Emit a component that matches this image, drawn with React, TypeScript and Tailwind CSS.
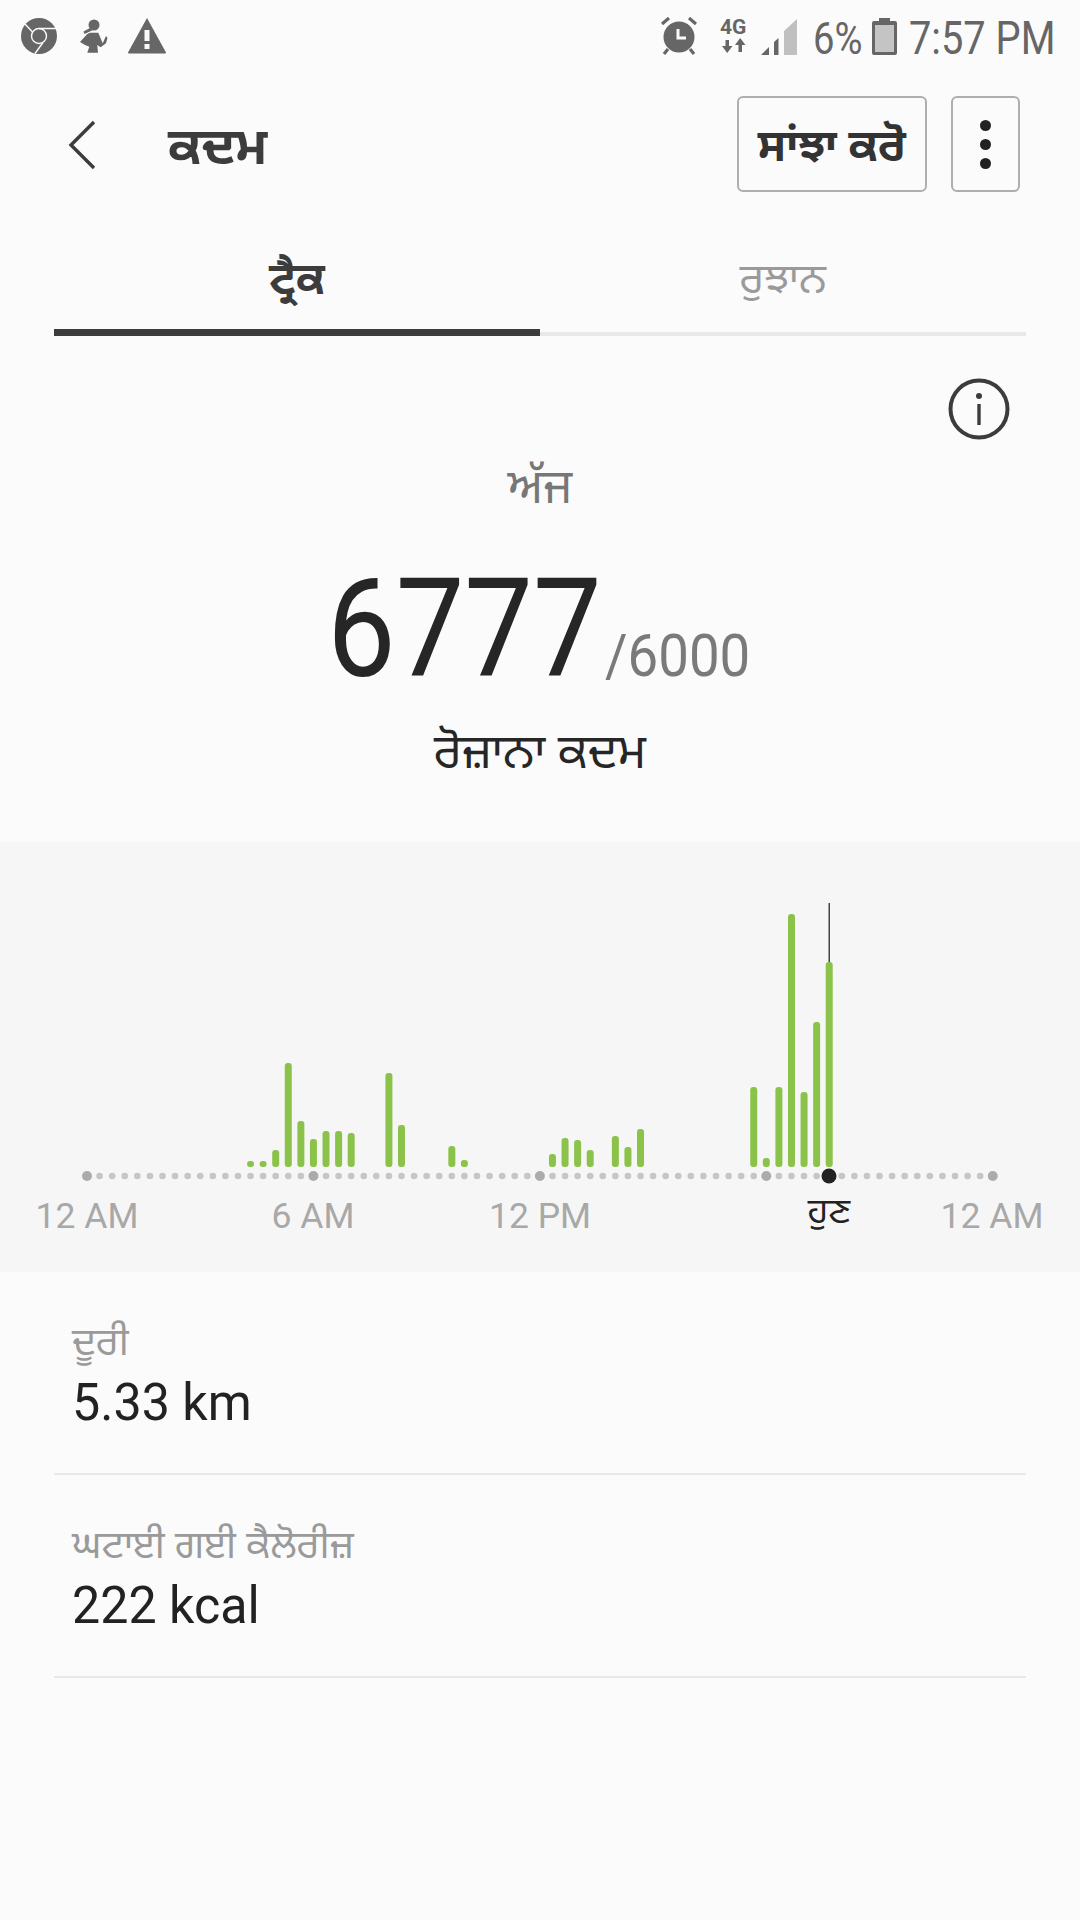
const font = { fontFamily: '"Noto Sans", "Noto Sans Gurmukhi", Roboto, sans-serif' };

const STEP = 12.58;
// [slot on the 15 min axis, top y of the bar]
const bars: [number, number][] = [
  [13, 1161], [14, 1161], [15, 1150], [16, 1063], [17, 1121], [18, 1139], [19, 1131], [20, 1131], [21, 1133],
  [24, 1073], [25, 1125], [29, 1146], [30, 1160],
  [37, 1154], [38, 1138], [39, 1140], [40, 1150], [42, 1136], [43, 1147], [44, 1129],
  [53, 1087], [54, 1158], [55, 1087], [56, 914], [57, 1092], [58, 1022], [59, 962],
];

function StatusBar() {
  return (
    <div className="h-[72px] flex items-center justify-between pl-[21px] pr-[27px] text-[#666666]">
      <div className="flex items-center">
        <svg width="36" height="36" viewBox="0 0 36 36">
          <circle cx="18" cy="18" r="18" fill="#666666" />
          <circle cx="18" cy="18" r="7.5" fill="none" stroke="#fbfbfb" strokeWidth="1.4" />
          <path d="M18 10.5H35M11.5 14L4 6M22 24.5L14 35.5" stroke="#fbfbfb" strokeWidth="1.4" fill="none" />
        </svg>
        <svg className="ml-[23px]" width="28" height="38" viewBox="0 0 28 38" fill="#666666">
          <circle cx="14" cy="8" r="5.5" />
          <path d="M11 10.5L3.5 14.5L4.5 17L12 13.5Z" />
          <path d="M10 15.7H18.3L22.7 26.3L26 19L27.5 21L26 26.3L20.7 30.3L17.3 28L18 35.7H7.3L9.3 29.7L5 28L0 25L7.3 17Z" />
        </svg>
        <svg className="ml-[20px]" width="38" height="36" viewBox="0 0 38 36">
          <path d="M19 0L38 34.5Q38 35.5 37 35.5H1Q0 35.5 0 34.5Z" fill="#666666" />
          <rect x="16.5" y="12" width="5" height="11" fill="#fbfbfb" />
          <rect x="16.5" y="26" width="5" height="5" fill="#fbfbfb" />
        </svg>
      </div>
      <div className="flex items-center">
        <svg width="36" height="38" viewBox="0 0 36 38">
          <circle cx="18" cy="20" r="15.5" fill="#666666" />
          <path d="M1 7L8 1M35 7L28 1M7 32L3 37M29 32L33 37" stroke="#666666" strokeWidth="3.2" fill="none" />
          <path d="M17 12V21H25" stroke="#fbfbfb" strokeWidth="3" fill="none" />
        </svg>
        <svg className="ml-[22px] overflow-visible" width="30" height="38" viewBox="0 0 30 38">
          <text x="1" y="17" fontSize="21" fontWeight="700" fill="#666666" fontFamily="Roboto, sans-serif">4G</text>
          <path d="M6.5 23H10V29H13.5L8.2 36L3 29H6.5Z" fill="#666666" />
          <path d="M19.5 35H23V28H26.5L21.2 21L16 28H19.5Z" fill="#666666" />
        </svg>
        <svg className="ml-[12px]" width="36" height="38" viewBox="0 0 36 38">
          <path d="M0 38L8 30V38Z" fill="#666666" />
          <path d="M13 38V25L17.5 21V38Z" fill="#666666" />
          <path d="M23 38V14L36 2V38Z" fill="#c0c0c0" />
        </svg>
        <span className="w-[46px] ml-[16px] text-[45px] leading-none origin-left scale-x-[0.85] whitespace-nowrap translate-y-[2px]" style={{ fontFamily: "Roboto, sans-serif" }}>6%</span>
        <svg className="ml-[13px]" width="25" height="37" viewBox="0 0 25 37">
          <path d="M7 0H18V3H23Q25 3 25 5V35Q25 37 23 37H2Q0 37 0 35V5Q0 3 2 3H7Z" fill="#666666" />
          <rect x="3" y="7" width="19" height="27" fill="#c4c4c4" />
        </svg>
        <span className="w-[144px] ml-[12px] text-[46px] leading-none origin-left scale-x-[0.865] whitespace-nowrap translate-y-[2px]" style={{ fontFamily: "Roboto, sans-serif" }}>7:57 PM</span>
      </div>
    </div>
  );
}

function Chart() {
  const dots = [];
  for (let i = 0; i <= 72; i++) {
    const big = i % 18 === 0;
    dots.push(<circle key={i} cx={87 + i * STEP} cy={1176} r={big ? 5 : 3.3} fill={big ? "#ababab" : "#c6c6c6"} />);
  }
  return (
    <div className="bg-[#f6f6f6] h-[430px]">
      <svg className="block" width="1080" height="352" viewBox="0 842 1080 352">
        <rect x="828.5" y="903" width="1.5" height="70" fill="#444444" />
        {dots}
        {bars.map(([slot, top]) => (
          <rect key={slot} x={87 + slot * STEP - 3.5} y={top} width="7" height={1167 - top} rx="3" fill="#8bc34a" />
        ))}
        <circle cx="829" cy="1176" r="7.5" fill="#222222" />
      </svg>
      <div className="flex text-[35.5px] leading-[44px] text-[#a8a8a8]" style={{ fontFamily: "Roboto, sans-serif" }}>
        <span className="w-[120px] ml-[27px] text-center">12 AM</span>
        <span className="w-[120px] ml-[106px] text-center">6 AM</span>
        <span className="w-[120px] ml-[107px] text-center">12 PM</span>
        <span className="w-[120px] ml-[169px] text-center text-[#222222] -mt-[7px]" style={font}>ਹੁਣ</span>
        <span className="w-[120px] ml-[43px] text-center">12 AM</span>
      </div>
    </div>
  );
}

function Stat({ label, value, className }: { label: string; value: string; className: string }) {
  return (
    <div className={"border-b-2 border-[#e8e8e8] " + className}>
      <div className="pl-[18px] text-[39px] leading-[46px] text-[#9a9a9a] -mt-[5px]" style={font}>{label}</div>
      <div className="ml-[18px] mt-[10px] text-[52px] leading-[60px] text-[#222222] origin-left scale-x-[0.965]" style={{ fontFamily: "Roboto, sans-serif" }}>{value}</div>
    </div>
  );
}

export default function App() {
  return (
    <div className="w-[1080px] h-[1920px] bg-[#fbfbfb] overflow-hidden" style={font}>
      <StatusBar />

      <div className="h-[120px] pt-[24px] flex items-start pl-[68px] pr-[60px]">
        <svg className="mt-[24px]" width="28" height="50" viewBox="0 0 28 50">
          <path d="M26 2L3 25L26 48" stroke="#3c3c3c" strokeWidth="3.4" fill="none" />
        </svg>
        <div className="ml-[72px] mt-[18px] text-[51px] leading-[60px] font-bold text-[#3c3c3c]">ਕਦਮ</div>
        <div className="ml-auto w-[190px] h-[96px] border-2 border-[#aeaeae] rounded-[6px] flex items-center justify-center text-[45px] font-bold text-[#333333]">ਸਾਂਝਾ ਕਰੋ</div>
        <div className="ml-[24px] w-[69px] h-[96px] border-2 border-[#aeaeae] rounded-[6px] flex flex-col items-center justify-center gap-[8px]">
          <span className="w-[11px] h-[11px] rounded-full bg-[#222222]" />
          <span className="w-[11px] h-[11px] rounded-full bg-[#222222]" />
          <span className="w-[11px] h-[11px] rounded-full bg-[#222222]" />
        </div>
      </div>

      <div className="mx-[54px] h-[144px] flex">
        <div className="flex-1 border-b-[7px] border-[#3c3c3c] flex items-center justify-center pt-[32px] text-[44px] font-bold text-[#3c3c3c]">ਟ੍ਰੈਕ</div>
        <div className="flex-1 border-b-[4px] border-[#e8e8e8] flex items-center justify-center pt-[29px] text-[42px] text-[#9a9a9a]">ਰੁਝਾਨ</div>
      </div>

      <div className="h-[506px] flex flex-col items-center relative">
        <svg className="absolute left-[948px] top-[42px]" width="62" height="62" viewBox="0 0 62 62">
          <circle cx="31" cy="31" r="28.5" stroke="#3c3c3c" strokeWidth="4" fill="none" />
          <circle cx="31" cy="18" r="3" fill="#3c3c3c" />
          <rect x="29.3" y="26" width="3.4" height="21" fill="#3c3c3c" />
        </svg>
        <div className="mt-[119px] text-[48px] leading-[60px] text-[#777777]">ਅੱਜ</div>
        <div className="mt-[39px] flex items-baseline h-[150px] w-[420px]" style={{ fontFamily: "Roboto, sans-serif" }}>
          <span className="w-[275px] text-[138px] leading-[150px] font-[440] text-[#262626] origin-left scale-x-[0.885] -translate-x-[3px]">6777</span>
          <span className="text-[60px] leading-[60px] text-[#7a7a7a] origin-left scale-x-[0.91] whitespace-nowrap">/6000</span>
        </div>
        <div className="mt-[16px] text-[48px] leading-[60px] text-[#262626]">ਰੋਜ਼ਾਨਾ ਕਦਮ</div>
      </div>

      <Chart />

      <div className="mx-[54px]">
        <Stat label="ਦੂਰੀ" value="5.33 km" className="h-[203px] pt-[50px]" />
        <Stat label="ਘਟਾਈ ਗਈ ਕੈਲੋਰੀਜ਼" value="222 kcal" className="h-[203px] pt-[50px]" />
      </div>
    </div>
  );
}
